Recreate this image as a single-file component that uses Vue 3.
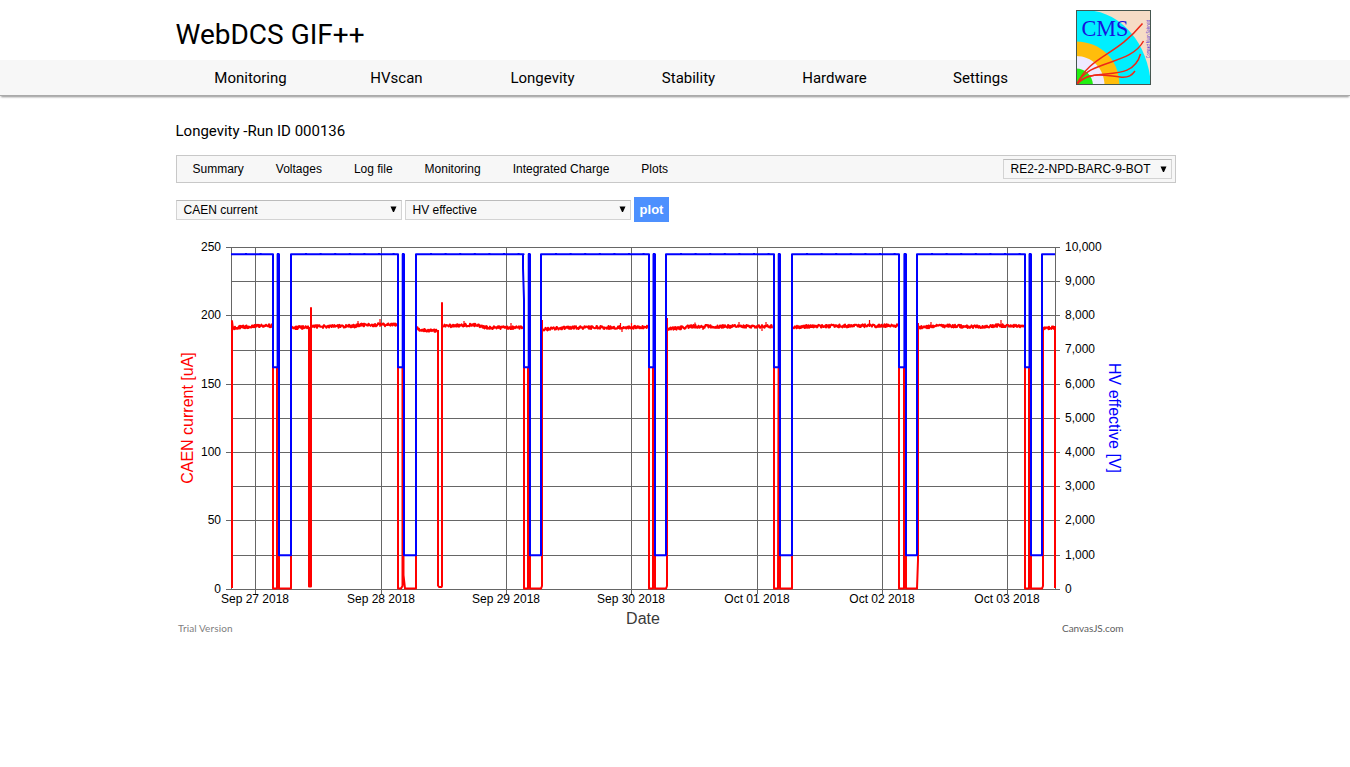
<script setup>
const nav = ['Monitoring', 'HVscan', 'Longevity', 'Stability', 'Hardware', 'Settings']
const tabs = ['Summary', 'Voltages', 'Log file', 'Monitoring', 'Integrated Charge', 'Plots']

const rows = [247, 281, 315, 350, 384, 418, 452, 486, 520, 555, 589]
const leftTicks = [250, 200, 150, 100, 50, 0].map((v, i) => ({ v, y: rows[i * 2] }))
const rightTicks = rows.map((y, i) => ({ y: i === 3 ? 349 : y, v: ((10 - i) * 1000).toLocaleString('en-US') }))
const days = [
  [255, 'Sep 27 2018'], [381, 'Sep 28 2018'], [506, 'Sep 29 2018'], [631, 'Sep 30 2018'],
  [757, 'Oct 01 2018'], [882, 'Oct 02 2018'], [1007, 'Oct 03 2018'],
]

// voltage cycle: drop, spike start, spike end, rise
const cycles = [
  [273, 277.6, 279, 291], [398, 402.7, 404, 416], [523.6, 528.7, 530, 541],
  [649, 653.5, 655, 666], [774, 778.7, 780, 792], [899, 904.4, 906, 917], [1025, 1029.5, 1031, 1042],
]
let blue = 'M231 254.3'
let bumps = ''
let from = 231
for (const [d, s, e, r] of cycles) {
  blue += `H${d}${d === 523.6 ? 'h-.6V268L524 300' : ''}V367.3H${s}V254.3H${e}V555.3H${r}V254.3`
  for (let x = from + 14; x < d - 3; x += 14.6) bumps += `M${x} 253.5h2`
  bumps += `M${s - 0.5} 253.5H${e}`
  from = r
}
blue += 'H1055'

let seed = 17
const rnd = () => {
  seed = (seed * 16807) % 2147483647
  return seed / 2147483647 - 0.5
}
const runs = [
  [[233, 328], [240, 327], [255, 326], [272, 325.3]],
  [[292, 327.3], [309, 327.2]],
  [[312, 326.3], [355, 325.8], [359, 324.8], [397, 324.2]],
  [[417, 328], [421, 329.5], [437, 330]],
  [[443, 325.6], [475, 324.6], [487, 327.3], [523, 327.3]],
  [[543, 329], [552, 328.3], [565, 327.3], [648, 327]],
  [[667, 328.3], [678, 328], [690, 326.2], [773, 326]],
  [[793, 327], [812, 326], [898, 325.2]],
  [[918, 327], [929, 326.5], [934, 325.3], [977, 326.5], [1000, 325.3], [1024, 325.6]],
  [[1043, 327.8], [1055, 327.6]],
]
const noisy = runs.map((pts) => {
  let out = ''
  for (let i = 0; i < pts.length - 1; i++) {
    const [x0, y0] = pts[i]
    const [x1, y1] = pts[i + 1]
    for (let x = x0; x <= x1; x += 0.5) {
      const y = y0 + 0.3 + ((y1 - y0) * (x - x0)) / (x1 - x0) + rnd() * 3
      out += `${out ? 'L' : 'M'}${x} ${y.toFixed(1)}`
    }
  }
  return out
}).join('')

const spikes = [[358, 321], [380, 319], [464, 321], [511, 323], [620.5, 323], [622, 332], [631.5, 323],
  [695, 322.5], [703, 330], [739, 322], [762, 331], [766, 322], [869.5, 320], [931, 322], [1001, 320]]
const spikePath = spikes.map(([x, y]) => `M${x} ${y}V327`).join('')

const drops = [
  'M232 588V321l1 8', 'M273 325V588.6H277V367M277 588.6V367M279 367V588.6H291V327',
  'M309 327V586.5H311V308V586.5M310 330V586.5', 'M398 325V588.6H401L402.5 586V367M403.5 367V575L405 588.6H416V327',
  'M438 330V585.5L439 587H441.5L442 586V303V326', 'M524 327V588.6H528V367M530 367V588.6H541L542 586V320',
  'M649 327V588.6H653V367M655 367V588.6H666L667 586V318', 'M774 326V588.6H778L778.6 367M780 367V588.6H792V327',
  'M899 326V588.6H904V367M906 367V588.6H917L918 560V323', 'M1025 326V588.6H1029V367M1031 367V588.6H1042L1043 586V328',
  'M1055 326V588',
].join('')
</script>

<template>
  <div class="page">
    <header>
      <div class="wrap">
        <h1>WebDCS GIF++</h1>
        <svg class="logo" width="75" height="75" viewBox="0 0 75 75">
          <rect width="75" height="75" fill="#f6dcc6" />
          <path d="M0 0H12C46 3 72 33 75 75H0Z" fill="#00efff" />
          <path d="M0 31.5C25 32 43 49 43.5 75H0Z" fill="#ffbd0b" />
          <path d="M0 46C16 46 28 58 28.5 75H0Z" fill="#eeeaff" />
          <path d="M0 58.5C9 58.5 16.5 65 17 75H0Z" fill="#22ef12" />
          <g fill="none" stroke="#ee2818" stroke-width="1.5">
            <path d="M1 74C15 45 39 47 66.500 13.500" />
            <path d="M1 74C13 49 54 56 67.500 31" />
            <path d="M1 74C16 55 56 75 64.500 44" />
            <path d="M1 74C14 60 31 66 44 67C53 68 56 65 59 61" />
          </g>
          <text x="5.500" y="25.500" class="cms" textLength="47" lengthAdjust="spacingAndGlyphs">CMS</text>
          <text class="solenoid" transform="translate(73.500 48) rotate(-90)" textLength="38" lengthAdjust="spacingAndGlyphs">Compact Muon Solenoid</text>
          <rect x=".5" y=".5" width="74" height="74" fill="none" stroke="#45564f" />
        </svg>
      </div>
      <nav>
        <div class="wrap links"><a v-for="n in nav" :key="n">{{ n }}</a></div>
      </nav>
    </header>

    <main class="wrap">
      <h2>Longevity -Run ID 000136</h2>
      <div class="tabs">
        <a v-for="t in tabs" :key="t">{{ t }}</a>
        <div class="select chamber"><span>RE2-2-NPD-BARC-9-BOT</span><svg width="7" height="7"><path d="M.5 .5H6.500L4 6H3Z" /></svg></div>
      </div>
      <div class="controls">
        <div class="select"><span>CAEN current</span><svg width="7" height="7"><path d="M.5 .5H6.500L4 6H3Z" /></svg></div>
        <div class="select"><span>HV effective</span><svg width="7" height="7"><path d="M.5 .5H6.500L4 6H3Z" /></svg></div>
        <button>plot</button>
      </div>

      <svg class="chart" width="960" height="400" viewBox="176 240 960 400">
        <g stroke="#666" shape-rendering="crispEdges">
          <line v-for="y in rows" :key="y" x1="231" x2="1060" :y1="y + 0.5" :y2="y + 0.5" />
          <line v-for="t in leftTicks" :key="t.v" x1="226" x2="231" :y1="t.y + 0.5" :y2="t.y + 0.5" />
          <line v-for="d in days" :key="d[0]" :x1="d[0] + 0.5" :x2="d[0] + 0.5" y1="247" y2="594" />
          <path d="M231.500 247V590M1055.500 247V590" />
        </g>
        <g class="series">
          <path :d="noisy" stroke="red" />
          <path :d="spikePath" stroke="red" class="thin" />
          <path :d="drops" stroke="red" />
          <path :d="blue" stroke="blue" />
          <path :d="bumps" stroke="blue" class="thin" />
        </g>
        <g class="ticks">
          <text v-for="t in leftTicks" :key="t.v" x="221" :y="t.y + 4" text-anchor="end">{{ t.v }}</text>
          <text v-for="t in rightTicks" :key="t.v" x="1065" :y="t.y + 4">{{ t.v }}</text>
          <text v-for="d in days" :key="d[1]" :x="d[0]" y="603" text-anchor="middle">{{ d[1] }}</text>
        </g>
        <text class="title" fill="red" transform="translate(193 418) rotate(-90)">CAEN current [uA]</text>
        <text class="title" fill="blue" transform="translate(1108.500 418) rotate(90)">HV effective [V]</text>
        <text class="title" fill="#3a3a3a" x="643" y="624">Date</text>
        <text class="credit" x="178" y="632" fill="#808080" textLength="54.5">Trial Version</text>
        <text class="credit" x="1062" y="632" fill="#606060" textLength="61.5">CanvasJS.com</text>
      </svg>
    </main>
  </div>
</template>

<style>
body { background: #fff; }
</style>

<style scoped>
.page { min-height: 767px; color: #000; font-family: Roboto, sans-serif; }
.wrap { width: 1000px; margin-left: 175.5px; }
header .wrap:first-child { position: relative; height: 60px; }
h1 { margin: 0; padding-top: 17px; font-size: 28px; line-height: 36px; font-weight: 400; }
.logo { position: absolute; left: 900.5px; top: 10px; z-index: 1; }
.cms { font: 24px "Liberation Serif", serif; fill: #1712df; }
.solenoid { font: 4.500px "Liberation Sans", sans-serif; fill: #3722d0; }
nav { height: 35px; background: #f7f7f7; border-bottom: 1px solid #aaa; box-shadow: 0 2px 2px -1px rgba(0, 0, 0, .45); }
.links { display: flex; }
.links a { width: 146px; box-sizing: border-box; padding-left: 4px; text-align: center; font-size: 15px; line-height: 36px; }
h2 { margin: 25px 0 14px; font-size: 15px; line-height: 20px; font-weight: 400; }
.tabs { display: flex; align-items: center; box-sizing: border-box; height: 28px; padding: 0 3px 0 16px; gap: 32px; border: 1px solid #c8c8c8; background: #f7f7f7; font: 12px "Liberation Sans", sans-serif; }
.select { display: flex; align-items: center; justify-content: space-between; box-sizing: border-box; width: 226px; height: 20px; padding: 0 4px 0 7px; border: 1px solid #d3d3d3; border-top-color: #bbb; background: #f7f7f7; font: 12px "Liberation Sans", sans-serif; }
.chamber { width: 169px; margin-left: auto; padding-left: 7px; }
.controls { display: flex; align-items: center; gap: 3px; margin-top: 14px; height: 25px; }
button { width: 35px; height: 25px; padding: 0 0 0 1px; border: 0; background: #4d90fe; color: #fff; font: bold 13px "Liberation Sans", sans-serif; }
.chart { display: block; margin: 18px 0 0 .5px; }
.series path { fill: none; stroke-width: 2; stroke-linejoin: round; }
.series .thin { stroke-width: 1.2; }
.ticks { font: 12px "Liberation Sans", sans-serif; }
.title { font: 16px "Liberation Sans", sans-serif; text-anchor: middle; }
.credit { font: 10px Lato, sans-serif; }
</style>
